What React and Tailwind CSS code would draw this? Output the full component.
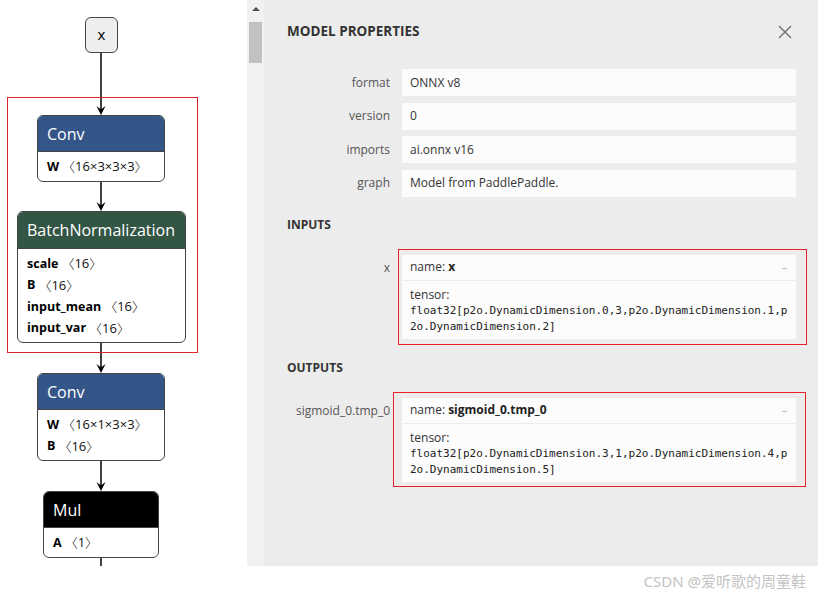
import React from "react";

const FONT = { fontFamily: '"Open Sans", "Noto Sans", "Noto Sans CJK SC", sans-serif' };
const MONO = { fontFamily: '"DejaVu Sans Mono", "Liberation Mono", monospace' };
const BR = { fontFamily: '"Noto Sans CJK SC", sans-serif' };

function Arrow({ from, to }) {
  const x = 101;
  return (
    <g>
      <line x1={x} y1={from} x2={x} y2={to - 4} stroke="#000" strokeWidth="1.5" />
      <path d={`M ${x - 4.5} ${to - 9} L ${x} ${to} L ${x + 4.5} ${to - 9} L ${x} ${to - 5.5} Z`} fill="#000" />
    </g>
  );
}

function Attr({ name, shape }) {
  return (
    <div className="h-[21.5px] whitespace-nowrap flex items-center">
      <span className="font-bold text-black leading-none">{name}</span>
      <span className="ml-[3px] inline-block text-[13px] font-light text-[#111] leading-none" style={BR}>〈</span>
      <span className="text-[13px] text-[#111] leading-none">{shape}</span>
      <span className="inline-block w-[8px] text-[13px] font-light text-[#111] leading-none" style={BR}>〉</span>
    </div>
  );
}

function Graph() {
  return (
    <div className="relative w-[247px] h-full bg-white overflow-hidden" style={FONT}>
      <svg className="absolute inset-0" width="247" height="566">
        <Arrow from={53} to={115} />
        <Arrow from={181} to={211} />
        <Arrow from={343} to={373} />
        <Arrow from={461} to={491} />
        <line x1="101" y1="558" x2="101" y2="566" stroke="#000" strokeWidth="1.5" />
      </svg>

      <div className="absolute left-[7px] top-[97px] w-[191px] h-[256px] border border-[#d9262c]" />

      <div className="absolute left-[85px] top-[17px] w-[33px] h-[36px] rounded-[6px] border-[1.5px] border-[#444] bg-[#eeeeee] flex items-center justify-center text-[15px] text-black leading-none pb-[1px]">
        x
      </div>

      <div className="absolute left-[37px] top-[115px] w-[128px] rounded-[6px] border-[1.5px] border-[#444] bg-white overflow-hidden">
        <div className="h-[35px] bg-[#335588] text-white text-[16px] pl-[9px] flex items-center">Conv</div>
        <div className="border-t-[1.5px] border-[#444] pl-[9px] pt-[4px] pb-[3px] text-[12.5px]">
          <Attr name="W" shape="16×3×3×3" />
        </div>
      </div>

      <div className="absolute left-[17px] top-[211px] w-[169px] rounded-[6px] border-[1.5px] border-[#444] bg-white overflow-hidden">
        <div className="h-[36px] bg-[#335544] text-white text-[16px] pl-[9px] flex items-center">BatchNormalization</div>
        <div className="border-t-[1.5px] border-[#444] pl-[9px] pt-[4px] pb-[3px] text-[12.5px]">
          <Attr name="scale" shape="16" />
          <Attr name="B" shape="16" />
          <Attr name="input_mean" shape="16" />
          <Attr name="input_var" shape="16" />
        </div>
      </div>

      <div className="absolute left-[37px] top-[373px] w-[128px] rounded-[6px] border-[1.5px] border-[#444] bg-white overflow-hidden">
        <div className="h-[35px] bg-[#335588] text-white text-[16px] pl-[9px] flex items-center">Conv</div>
        <div className="border-t-[1.5px] border-[#444] pl-[9px] pt-[4px] pb-[3px] text-[12.5px]">
          <Attr name="W" shape="16×1×3×3" />
          <Attr name="B" shape="16" />
        </div>
      </div>

      <div className="absolute left-[43px] top-[491px] w-[116px] rounded-[6px] border-[1.5px] border-[#444] bg-white overflow-hidden">
        <div className="h-[35px] bg-black text-white text-[16px] pl-[9px] flex items-center">Mul</div>
        <div className="border-t-[1.5px] border-[#444] pl-[9px] pt-[4px] pb-[3px] text-[12.5px]">
          <Attr name="A" shape="1" />
        </div>
      </div>
    </div>
  );
}

function Scrollbar() {
  return (
    <div className="w-[17px] h-full bg-[#f1f1f1] flex flex-col items-center">
      <div className="h-[17px] flex items-center justify-center">
        <div className="w-0 h-0 border-l-[4px] border-r-[4px] border-b-[4px] border-l-transparent border-r-transparent border-b-[#505050]" />
      </div>
      <div className="mt-[5px] w-[13px] h-[41px] bg-[#c1c1c1]" />
    </div>
  );
}

function PropRow({ label, value }) {
  return (
    <div className="flex items-center h-[27px]">
      <div className="w-[103px] text-right text-[12px] text-[#555]">{label}</div>
      <div className="ml-[12px] w-[394px] h-full bg-[#fcfcfc] flex items-center pl-[8px] text-[12px] text-[#333]">{value}</div>
    </div>
  );
}

function Arg({ label, name, line1, line2, redClass }) {
  return (
    <div className="flex">
      <div className="w-[103px] text-right text-[12px] text-[#555] leading-[26px] whitespace-nowrap">{label}</div>
      <div className="relative ml-[12px] w-[394px]">
        <div className={redClass} />
        <div className="relative bg-[#fcfcfc]">
          <div className="h-[26px] flex items-center justify-between pl-[8px] pr-[9px] border-b border-[#ececec] text-[12px] text-[#333]">
            <div>
              name: <span className="font-bold text-[#222]">{name}</span>
            </div>
            <div className="text-[#aaa] text-[10px]">–</div>
          </div>
          <div className="pl-[8px] pt-[6px] pb-[4px] leading-[16px]">
            <div className="text-[12px] text-[#333]">tensor:</div>
            <div className="text-[11px] text-[#222]" style={MONO}>{line1}</div>
            <div className="text-[11px] text-[#222]" style={MONO}>{line2}</div>
          </div>
        </div>
      </div>
    </div>
  );
}

function Panel() {
  return (
    <div className="flex-1 h-full bg-[#ececec] pl-[23px] flex flex-col" style={FONT}>
      <div className="h-[62px] flex items-center justify-between pr-[26px] pt-[1px]">
        <div className="text-[13.5px] font-bold text-[#333]">MODEL PROPERTIES</div>
        <svg width="14" height="14" viewBox="0 0 14 14">
          <path d="M1 1 L13 13 M13 1 L1 13" stroke="#777" strokeWidth="1.5" />
        </svg>
      </div>
      <div className="mt-[7px] flex flex-col gap-[6.5px]">
        <PropRow label="format" value="ONNX v8" />
        <PropRow label="version" value="0" />
        <PropRow label="imports" value="ai.onnx v16" />
        <PropRow label="graph" value="Model from PaddlePaddle." />
      </div>
      <div className="mt-[18px] h-[20px] flex items-center text-[12px] font-bold text-[#333]">INPUTS</div>
      <div className="mt-[20px]">
        <Arg
          label="x"
          name="x"
          line1="float32[p2o.DynamicDimension.0,3,p2o.DynamicDimension.1,p"
          line2="2o.DynamicDimension.2]"
          redClass="absolute left-[-4px] top-[-6px] w-[409px] h-[96px] border border-[#e8202a]"
        />
      </div>
      <div className="mt-[19px] h-[20px] flex items-center text-[12px] font-bold text-[#333]">OUTPUTS</div>
      <div className="mt-[20px]">
        <Arg
          label="sigmoid_0.tmp_0"
          name="sigmoid_0.tmp_0"
          line1="float32[p2o.DynamicDimension.3,1,p2o.DynamicDimension.4,p"
          line2="2o.DynamicDimension.5]"
          redClass="absolute left-[-9px] top-[-6px] w-[413px] h-[95px] border border-[#e8202a]"
        />
      </div>
    </div>
  );
}

export default function App() {
  return (
    <div className="w-[818px] h-[597px] bg-white flex flex-col overflow-hidden">
      <div className="flex h-[566px]">
        <Graph />
        <Scrollbar />
        <Panel />
      </div>
      <div className="flex-1 flex items-center justify-end pr-[12px]">
        <div className="text-[15px] text-[#c4c4c4]" style={{ fontFamily: '"Noto Sans", "Noto Sans CJK SC", sans-serif' }}>
          CSDN @爱听歌的周童鞋
        </div>
      </div>
    </div>
  );
}
